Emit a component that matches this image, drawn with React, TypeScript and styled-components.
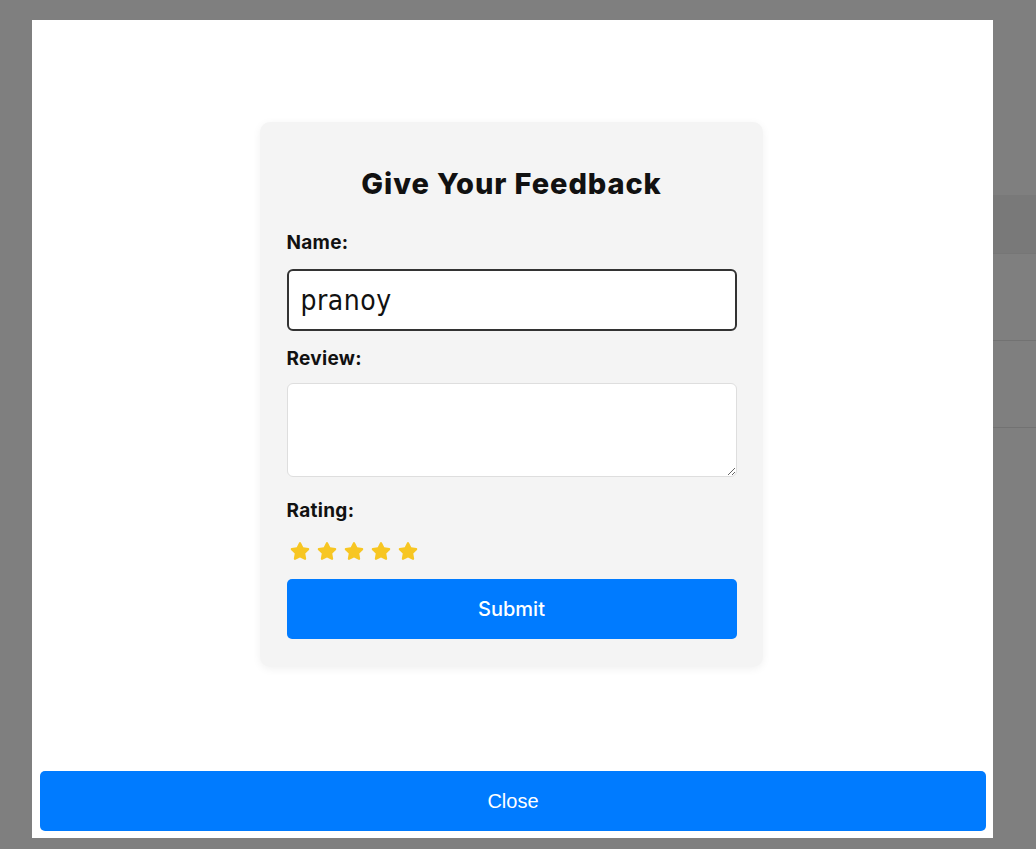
import styled, { createGlobalStyle } from 'styled-components';
import { FaStar } from 'react-icons/fa';

const GlobalStyle = createGlobalStyle`
  html, body {
    margin: 0;
    padding: 0;
    height: 100%;
    background: #ffffff;
    font-family: Inter, "Noto Sans", sans-serif;
  }
`;

// page behind the dimmed overlay, only its right edge peeks out
const Page = styled.div`
  height: 849px;
  display: flex;
  flex-direction: column;
  padding: 195px 0 0 993px;
  box-sizing: border-box;
`;

const TableHead = styled.div`
  height: 58px;
  background: #f2f2f2;
  border-bottom: 1px solid #ececec;
`;

const TableRow = styled.div`
  height: 86px;
  border-bottom: 1px solid #e4e4e4;
`;

const Overlay = styled.div`
  position: fixed;
  inset: 0;
  background: rgba(0, 0, 0, 0.5);
`;

const Modal = styled.div`
  position: fixed;
  left: 32px;
  top: 20px;
  width: 961px;
  height: 818px;
  background: #ffffff;
  display: flex;
  flex-direction: column;
  align-items: center;
  padding: 102px 7px 7px 8px;
  box-sizing: border-box;
`;

const Card = styled.form`
  width: 503px;
  margin-right: 4px;
  box-sizing: border-box;
  background: #f4f4f4;
  border-radius: 10px;
  box-shadow: 0 2px 8px rgba(0, 0, 0, 0.06);
  padding: 42px 26px 28px 27px;
  display: flex;
  flex-direction: column;
`;

const Title = styled.h2`
  margin: 0 0 27px;
  text-align: center;
  font-size: 29px;
  font-weight: 800;
  letter-spacing: 0.9px;
  color: #111;
  line-height: 40px;
`;

const Label = styled.label<{ $gap: number }>`
  font-size: 19px;
  font-weight: 700;
  letter-spacing: 0.3px;
  color: #111;
  line-height: 24px;
  margin-bottom: ${(p) => p.$gap}px;
`;

const NameInput = styled.input`
  height: 62px;
  box-sizing: border-box;
  border: 2px solid #333;
  border-radius: 6px;
  background: #fff;
  padding: 0 12px;
  font-family: "DejaVu Sans Condensed", "DejaVu Sans", sans-serif;
  font-stretch: condensed;
  font-size: 28px;
  letter-spacing: 0.5px;
  color: #111;
  margin-bottom: 16px;
  outline: none;
`;

const ReviewArea = styled.textarea`
  height: 94px;
  box-sizing: border-box;
  border: 1px solid #dedede;
  border-radius: 6px;
  background: #fff;
  margin-bottom: 22px;
  font-family: inherit;
`;

const Stars = styled.div`
  display: flex;
  gap: 7px;
  padding-left: 3px;
  margin-bottom: 18px;
  color: #f7c622;
`;

const BlueButton = styled.button<{ $font?: string }>`
  height: 60px;
  width: 100%;
  flex-shrink: 0;
  border: none;
  border-radius: 5px;
  background: #007bff;
  color: #fff;
  font-size: 20px;
  font-weight: 500;
  font-family: ${(p) => p.$font || 'Inter, sans-serif'};
  cursor: pointer;
`;

const Spacer = styled.div`
  flex: 1;
`;

export default function App() {
  return (
    <>
      <GlobalStyle />
      <Page>
        <TableHead />
        <TableRow />
        <TableRow />
      </Page>
      <Overlay />
      <Modal>
        <Card onSubmit={(e) => e.preventDefault()}>
          <Title>Give Your Feedback</Title>
          <Label $gap={14}>Name:</Label>
          <NameInput defaultValue="pranoy" />
          <Label $gap={12}>Review:</Label>
          <ReviewArea />
          <Label $gap={18}>Rating:</Label>
          <Stars>
            {[0, 1, 2, 3, 4].map((i) => (
              <FaStar key={i} size={20} />
            ))}
          </Stars>
          <BlueButton type="submit">Submit</BlueButton>
        </Card>
        <Spacer />
        <BlueButton $font={'"Liberation Sans", Arial, sans-serif'}>Close</BlueButton>
      </Modal>
    </>
  );
}
